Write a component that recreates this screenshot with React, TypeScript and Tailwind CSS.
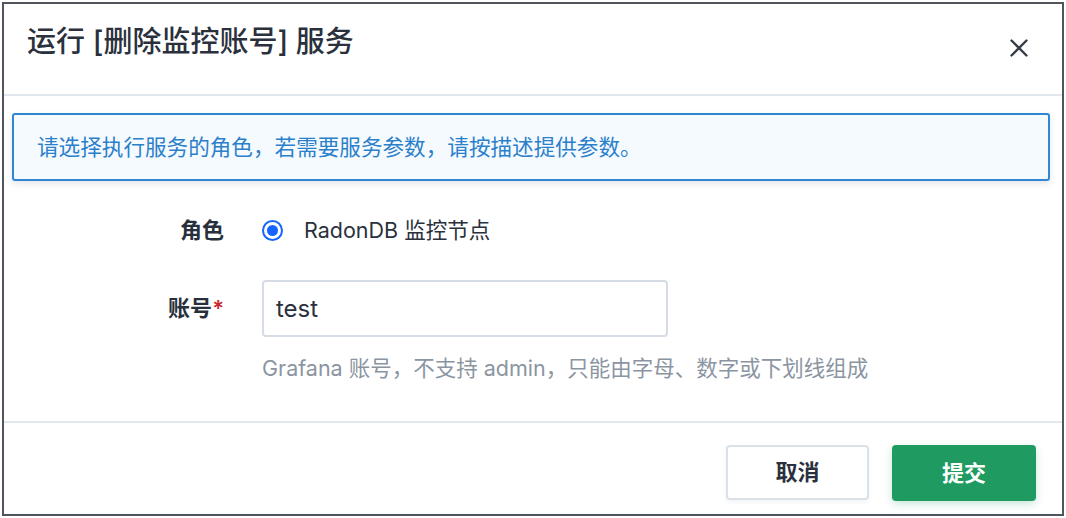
import React from "react";

const FONT = 'Inter, "Noto Sans CJK SC", "Noto Sans", sans-serif';

export default function App() {
  return (
    <div className="w-[1066px] h-[518px] bg-white p-[2px]" style={{ fontFamily: FONT }}>
      <div className="h-full border-2 border-[#50545c] bg-white flex flex-col">
        {/* Header */}
        <div className="h-[92px] shrink-0 flex items-start justify-between pl-[23px] pr-[34px] border-b-2 border-[#e1e7ee]">
          <h1 className="pt-[20px] text-[29px] leading-[36px] font-medium text-[#2a313c]">
            运行 [删除监控账号] 服务
          </h1>
          <button className="mt-[35px] w-[18px] h-[18px] text-[#363d48]">
            <svg viewBox="0 0 18 18" width="18" height="18" fill="none" stroke="currentColor" strokeWidth="2.4" strokeLinecap="round">
              <path d="M1.5 1.5 L16.5 16.5 M16.5 1.5 L1.5 16.5" />
            </svg>
          </button>
        </div>

        {/* Body */}
        <div className="flex-1 flex flex-col">
          <div className="mt-[17px] ml-[8px] mr-[12px] h-[68px] flex items-center pl-[23px] rounded-[3px] border-2 border-[#2f86d3] bg-[#f5faff] shadow-[0_3px_6px_rgba(30,60,90,0.12)]">
            <span className="text-[21.6px] text-[#2b80cb]">请选择执行服务的角色，若需要服务参数，请按描述提供参数。</span>
          </div>

          <div className="mt-[31px] flex items-center h-[36px]">
            <div className="w-[220px] text-right text-[22px] font-semibold text-[#28303b]">角色</div>
            <div className="ml-[38px] flex items-center">
              <span className="w-[21px] h-[21px] rounded-full border-[2.5px] border-[#1664ff] flex items-center justify-center">
                <span className="w-[11px] h-[11px] rounded-full bg-[#1664ff]" />
              </span>
              <span className="ml-[21px] text-[21.5px] text-[#2a313c]">RadonDB 监控节点</span>
            </div>
          </div>

          <div className="mt-[32px] flex items-center">
            <div className="w-[220px] text-right text-[22px] font-semibold text-[#28303b]">
              账号<span className="text-[#c8252c]">*</span>
            </div>
            <div className="ml-[38px] w-[406px] h-[57px] border-2 border-[#d5dce5] rounded-[4px] flex items-center pl-[12px] text-[24px] text-[#2a313c]">
              test
            </div>
          </div>

          <div className="mt-[17px] ml-[258px] text-[21.5px] leading-[28px] text-[#8b95a2]">
            Grafana 账号，不支持 admin，只能由字母、数字或下划线组成
          </div>
        </div>

        {/* Footer */}
        <div className="h-[93px] shrink-0 border-t-2 border-[#e1e7ee] flex items-start justify-end gap-[23px] pt-[22px] pr-[26px]">
          <button className="w-[143px] h-[55px] rounded-[4px] border-2 border-[#dae1e9] bg-white text-[22px] font-semibold text-[#2a313c] shadow-[0_2px_4px_rgba(30,50,80,0.06)]">
            取消
          </button>
          <button className="w-[144px] h-[56px] rounded-[4px] bg-[#1f9b62] text-[22px] font-semibold text-white shadow-[0_3px_8px_rgba(31,155,98,0.25)]">
            提交
          </button>
        </div>
      </div>
    </div>
  );
}
